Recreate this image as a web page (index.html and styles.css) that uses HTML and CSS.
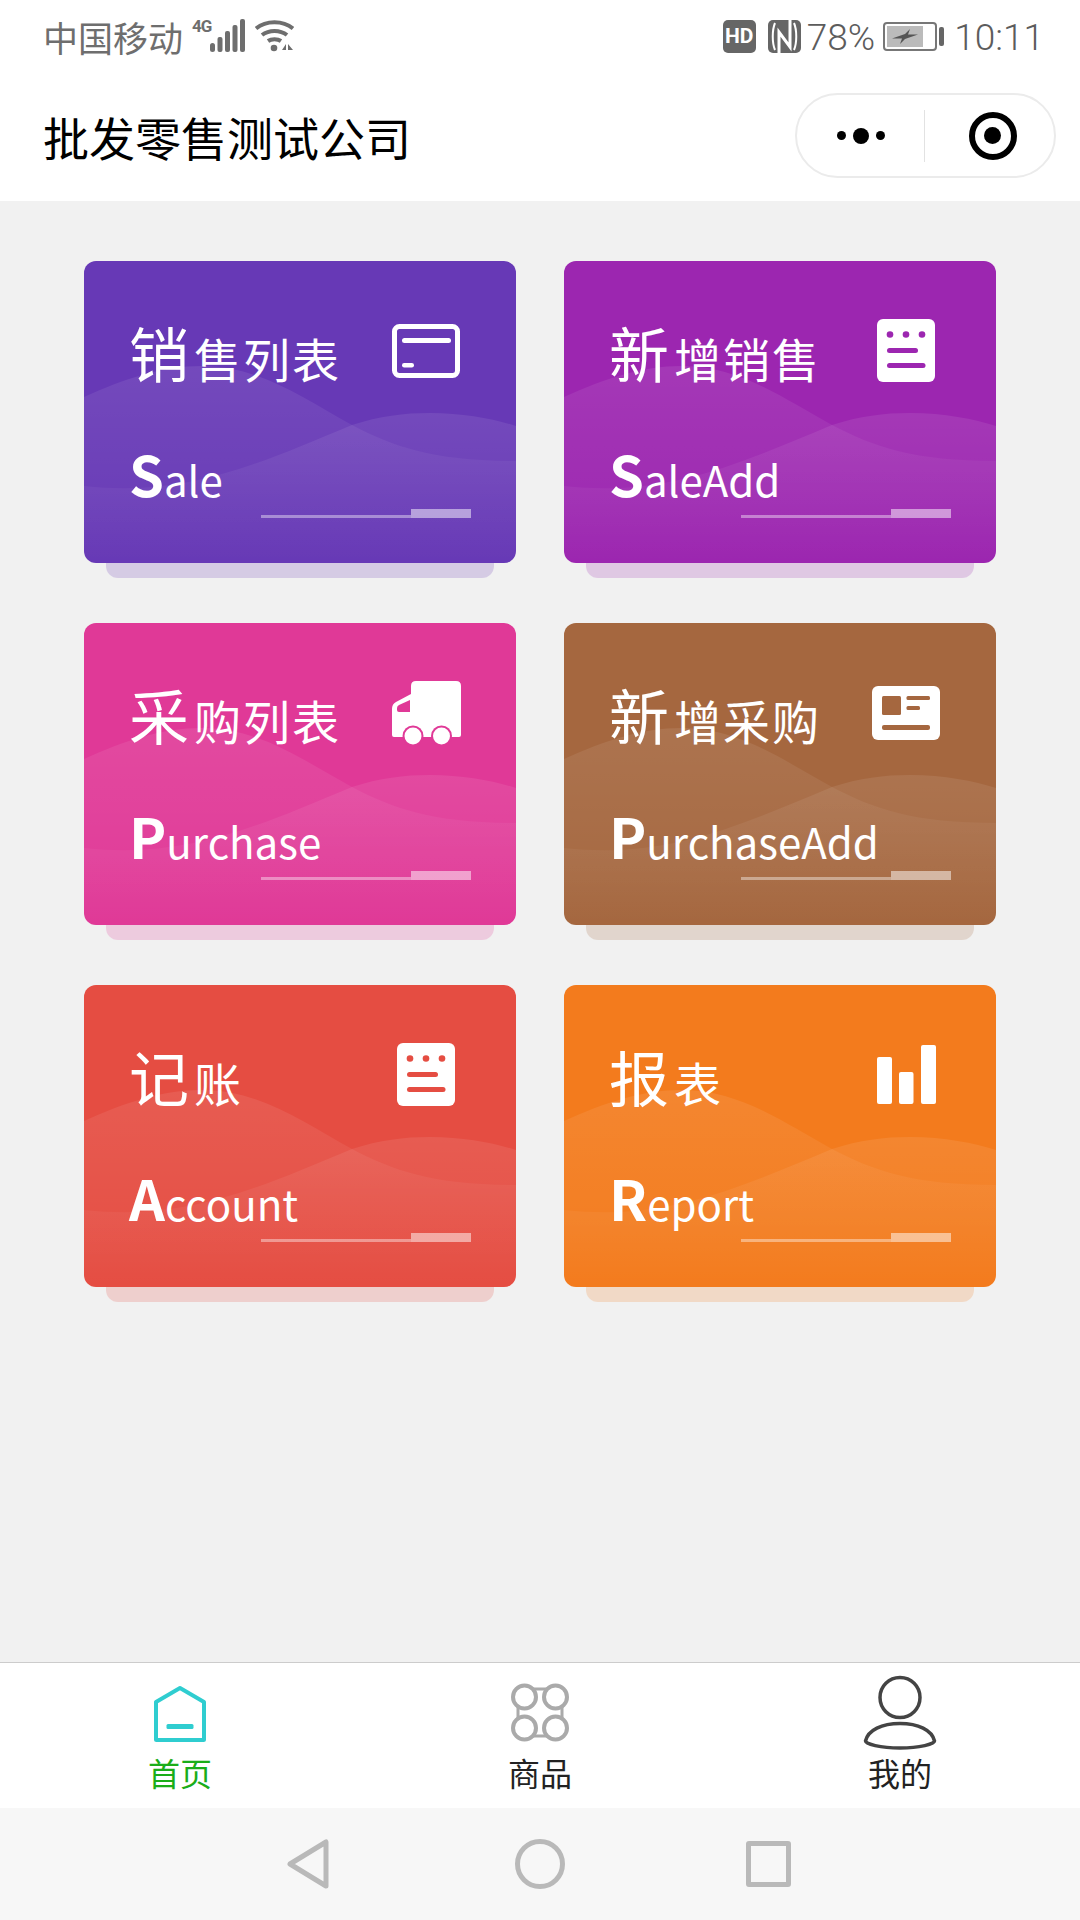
FILE: index.html
```html
<!DOCTYPE html>
<html lang="zh-CN">
<head>
    <meta charset="UTF-8">
    <meta name="viewport" content="width=device-width, initial-scale=1.0">
    <title>批发零售测试公司</title>
    <link rel="stylesheet" href="styles.css">
</head>
<body>
    <!-- Shared shapes -->
    <svg class="defs" width="0" height="0">
        <defs>
            <linearGradient id="waveFade" x1="0" y1="0" x2="0" y2="1">
                <stop offset="0" stop-color="#fff" stop-opacity="0.085"/>
                <stop offset="1" stop-color="#fff" stop-opacity="0"/>
            </linearGradient>
            <symbol id="waves" viewBox="0 0 432 302">
                <path fill="url(#waveFade)" d="M0 136C40 118 78 105 118 105C176 105 220 138 268 164C310 186 350 200 432 200V302H0Z"/>
                <path fill="url(#waveFade)" d="M0 225C100 236 170 205 268 164C296 155 320 152 346 152C380 152 410 158 432 165V302H0Z"/>
            </symbol>
            <symbol id="doc" viewBox="0 0 80 80">
                <rect x="11" y="8" width="58" height="63" rx="6" fill="#fff"/>
                <g class="cut">
                    <circle cx="24" cy="23.5" r="3.3"/>
                    <circle cx="40" cy="23.5" r="3.3"/>
                    <circle cx="56" cy="23.5" r="3.3"/>
                    <rect x="21" y="37" width="31" height="5" rx="2.5"/>
                    <rect x="21" y="52" width="38.5" height="5" rx="2.5"/>
                </g>
            </symbol>
        </defs>
    </svg>

    <div class="status-bar">
        <div class="status-left">
            <span class="carrier">中国移动</span>
            <span class="net">4G</span>
            <svg class="signal" width="35" height="33" viewBox="0 0 35 33">
                <rect x="0" y="24" width="5" height="9" rx="2.5"/>
                <rect x="7.500" y="18" width="5" height="15" rx="2"/>
                <rect x="15" y="12" width="5" height="21" rx="2"/>
                <rect x="22.500" y="6" width="5" height="27" rx="2"/>
                <rect x="30" y="0" width="5" height="33" rx="2"/>
            </svg>
            <svg class="wifi" width="39" height="33" viewBox="0 0 39 33">
                <path d="M1 9.500C11 1 28 1 38 9.500M7 16C14 10.500 25 10.500 32 16M13 22C16.500 19.500 22.500 19.500 26 22" fill="none" stroke="#6e6e6e" stroke-width="4"/>
                <circle cx="19" cy="29" r="3.300" fill="#6e6e6e"/>
                <path d="M27 31H31V25ZM33 25V31H38Z" fill="#6e6e6e"/>
            </svg>
        </div>
        <div class="status-right">
            <span class="hd">HD</span>
            <svg class="nfc" width="33" height="33" viewBox="0 0 33 33">
                <rect width="33" height="33" rx="5" fill="#666"/>
                <path d="M7 3C4 10 4 23 7 30M26 3C29 10 29 23 26 30" fill="none" stroke="#fff" stroke-width="2"/>
                <path d="M11 33V12L22 27V0" fill="none" stroke="#fff" stroke-width="3"/>
            </svg>
            <span class="pct">78%</span>
            <div class="battery">
                <div class="battery-body">
                    <div class="battery-fill">
                        <svg width="26" height="15" viewBox="0 0 26 15"><path d="M0 9.500L13 5L18 0L16 5.500L26 5.500L13 10L8 15L10 9.500Z" fill="#555"/></svg>
                    </div>
                </div>
                <div class="battery-nub"></div>
            </div>
            <span class="clock">10:11</span>
        </div>
    </div>

    <div class="nav-bar">
        <div class="nav-title">批发零售测试公司</div>
        <div class="capsule">
            <div class="capsule-more">
                <span class="dot"></span>
                <span class="dot dot-big"></span>
                <span class="dot"></span>
            </div>
            <div class="capsule-line"></div>
            <div class="capsule-close"><span class="target"></span></div>
        </div>
    </div>

    <div class="main">
        <div class="grid">
            <div class="card purple">
                <svg class="card-waves"><use href="#waves"/></svg>
                <div class="card-top">
                    <div class="card-title"><span class="first">销</span>售列表</div>
                    <svg class="card-icon" viewBox="0 0 80 80">
                        <rect x="8.500" y="15.500" width="63" height="49" rx="5" fill="none" stroke="#fff" stroke-width="5"/>
                        <rect x="16" y="27" width="49" height="5" rx="2.500" fill="#fff"/>
                        <rect x="16" y="52" width="12" height="4.500" rx="2.200" fill="#fff"/>
                    </svg>
                </div>
                <div class="card-en"><span class="first">S</span>ale</div>
                <div class="card-bar"><span class="bar-line"></span><span class="bar-block"></span></div>
            </div>

            <div class="card mauve">
                <svg class="card-waves"><use href="#waves"/></svg>
                <div class="card-top">
                    <div class="card-title"><span class="first">新</span>增销售</div>
                    <svg class="card-icon" viewBox="0 0 80 80"><use href="#doc"/></svg>
                </div>
                <div class="card-en"><span class="first">S</span>aleAdd</div>
                <div class="card-bar"><span class="bar-line"></span><span class="bar-block"></span></div>
            </div>

            <div class="card pink">
                <svg class="card-waves"><use href="#waves"/></svg>
                <div class="card-top">
                    <div class="card-title"><span class="first">采</span>购列表</div>
                    <svg class="card-icon" viewBox="0 0 80 80">
                        <path d="M25 13Q25 8 30 8H70Q75 8 75 13V62Q75 64 73 64H8Q6 64 6 62V36Q6 31 10 29L25 21Z" fill="#fff"/>
                        <path class="cut" d="M24 27V39H13Q11 39 11 37V35Q11 33 13 32Z"/>
                        <circle class="cut" cx="27" cy="63" r="10.500"/>
                        <circle class="cut" cx="55.500" cy="63" r="10.500"/>
                        <circle cx="27" cy="63" r="8.500" fill="#fff"/>
                        <circle cx="55.500" cy="63" r="8.500" fill="#fff"/>
                    </svg>
                </div>
                <div class="card-en"><span class="first">P</span>urchase</div>
                <div class="card-bar"><span class="bar-line"></span><span class="bar-block"></span></div>
            </div>

            <div class="card brown">
                <svg class="card-waves"><use href="#waves"/></svg>
                <div class="card-top">
                    <div class="card-title"><span class="first">新</span>增采购</div>
                    <svg class="card-icon" viewBox="0 0 80 80">
                        <rect x="6" y="13" width="68" height="54" rx="6" fill="#fff"/>
                        <g class="cut">
                            <rect x="16" y="23" width="19" height="19" rx="1.500"/>
                            <rect x="40.500" y="23" width="23.500" height="4" rx="1.500"/>
                            <rect x="40.500" y="33" width="13.500" height="4" rx="1.500"/>
                            <rect x="16" y="52" width="48" height="5" rx="2"/>
                        </g>
                    </svg>
                </div>
                <div class="card-en"><span class="first">P</span>urchaseAdd</div>
                <div class="card-bar"><span class="bar-line"></span><span class="bar-block"></span></div>
            </div>

            <div class="card red">
                <svg class="card-waves"><use href="#waves"/></svg>
                <div class="card-top">
                    <div class="card-title"><span class="first">记</span>账</div>
                    <svg class="card-icon" viewBox="0 0 80 80"><use href="#doc"/></svg>
                </div>
                <div class="card-en"><span class="first">A</span>ccount</div>
                <div class="card-bar"><span class="bar-line"></span><span class="bar-block"></span></div>
            </div>

            <div class="card orange">
                <svg class="card-waves"><use href="#waves"/></svg>
                <div class="card-top">
                    <div class="card-title"><span class="first">报</span>表</div>
                    <svg class="card-icon" viewBox="0 0 80 80" fill="#fff">
                        <rect x="11" y="22" width="15" height="47" rx="2"/>
                        <rect x="33" y="37" width="14.500" height="32" rx="2"/>
                        <rect x="55" y="10" width="15" height="59" rx="2"/>
                    </svg>
                </div>
                <div class="card-en"><span class="first">R</span>eport</div>
                <div class="card-bar"><span class="bar-line"></span><span class="bar-block"></span></div>
            </div>
        </div>
    </div>

    <div class="tab-bar">
        <div class="tab active">
            <svg class="tab-icon" viewBox="0 0 80 80">
                <path d="M40 15L16 29V66.500Q16 67 16.500 67H63.500Q64 67 64 66.500V29Z" fill="none" stroke="#2fcdd0" stroke-width="4" stroke-linejoin="round"/>
                <rect x="26.500" y="51" width="27" height="5" rx="1.500" fill="#2fcdd0"/>
            </svg>
            <span class="tab-label">首页</span>
        </div>
        <div class="tab">
            <svg class="tab-icon" viewBox="0 0 80 80" fill="none" stroke="#aaa">
                <path d="M33 16H47M33 63H47M18 33.500V45.500M62 33.500V45.500" stroke-width="3"/>
                <g stroke-width="4">
                    <circle cx="24.500" cy="24" r="11.500"/>
                    <circle cx="55.500" cy="24" r="11.500"/>
                    <circle cx="24.500" cy="55" r="11.500"/>
                    <circle cx="55.500" cy="55" r="11.500"/>
                </g>
            </svg>
            <span class="tab-label">商品</span>
        </div>
        <div class="tab">
            <svg class="tab-icon" viewBox="0 0 80 80" fill="none" stroke="#444" stroke-width="3.500">
                <circle cx="40" cy="24.500" r="20"/>
                <path d="M5.500 68C8 57 22 50.500 40 50.500C58 50.500 72 57 74.500 68C74.500 71 60 75 40 75C20 75 5.500 71 5.500 68Z"/>
            </svg>
            <span class="tab-label">我的</span>
        </div>
    </div>

    <div class="sys-nav">
        <svg width="42" height="50" viewBox="0 0 42 50"><path d="M39 3V47L3 25Z" fill="none" stroke="#b9b9b9" stroke-width="5" stroke-linejoin="round"/></svg>
        <span class="sys-circle"></span>
        <span class="sys-square"></span>
    </div>
</body>
</html>
```

FILE: styles.css
```css
* {
    margin: 0;
    padding: 0;
    box-sizing: border-box;
}

body {
    width: 1080px;
    height: 1920px;
    display: flex;
    flex-direction: column;
    background: #f1f1f1;
    font-family: "Noto Sans CJK SC", "Noto Sans", sans-serif;
    overflow: hidden;
}

.defs {
    position: absolute;
}

/* Status bar */
.status-bar {
    height: 72px;
    display: flex;
    justify-content: space-between;
    padding: 19px 36px 0 43px;
    background: #fff;
    color: #6e6e6e;
}

.status-left,
.status-right {
    display: flex;
    align-items: flex-start;
}

.carrier {
    font-size: 35px;
    line-height: 36px;
}

.net {
    width: 18px;
    margin: 0 0 0 9px;
    font: bold 17px/14px "Roboto", sans-serif;
    letter-spacing: -1px;
}

.signal {
    fill: #6e6e6e;
}

.wifi {
    margin-left: 10px;
}

.hd {
    width: 33px;
    height: 33px;
    margin-top: 1px;
    background: #666;
    border-radius: 5px;
    color: #fff;
    font: bold 21px/33px "Roboto", sans-serif;
    text-align: center;
}

.nfc {
    margin: 1px 0 0 12px;
}

.pct,
.clock {
    font: 300 37px/36px "Roboto", sans-serif;
    margin-top: 1px;
    color: #5c5c5c;
}

.pct {
    margin-left: 6px;
}

.clock {
    margin-left: 10px;
}

.battery {
    display: flex;
    align-items: center;
    margin: 3px 0 0 8px;
}

.battery-body {
    width: 54px;
    height: 29px;
    border: 2px solid #777;
    border-radius: 4px;
    padding: 2px;
}

.battery-fill {
    width: 36px;
    height: 21px;
    background: #bbb;
    display: flex;
    align-items: center;
    justify-content: center;
}

.battery-nub {
    width: 5px;
    height: 19px;
    margin-left: 2px;
    background: #666;
    border-radius: 2px;
}

/* Title bar */
.nav-bar {
    height: 129px;
    display: flex;
    justify-content: space-between;
    align-items: flex-start;
    padding: 21px 24px 0 43px;
    background: #fff;
}

.nav-title {
    margin-top: 15px;
    font-size: 46px;
    line-height: 56px;
    color: #000;
}

.capsule {
    width: 261px;
    height: 85px;
    display: flex;
    align-items: center;
    border: 2px solid #ebebeb;
    border-radius: 43px;
}

.capsule-more {
    width: 127px;
    display: flex;
    align-items: center;
    justify-content: center;
    gap: 7px;
}

.dot {
    width: 9px;
    height: 9px;
    background: #000;
    border-radius: 50%;
}

.dot-big {
    width: 16px;
    height: 16px;
}

.capsule-line {
    width: 1px;
    height: 52px;
    background: #e2e2e2;
}

.capsule-close {
    flex: 1;
    display: flex;
    justify-content: center;
    padding-left: 6px;
}

.target {
    width: 48px;
    height: 48px;
    border: 6px solid #000;
    border-radius: 50%;
    display: flex;
    align-items: center;
    justify-content: center;
}

.target:after {
    content: "";
    width: 17px;
    height: 17px;
    background: #000;
    border-radius: 50%;
}

/* Cards */
.main {
    flex: 1;
    padding: 60px 84px 0;
}

.grid {
    display: grid;
    grid-template-columns: 432px 432px;
    column-gap: 48px;
    row-gap: 60px;
    isolation: isolate;
}

.card {
    position: relative;
    height: 302px;
    display: flex;
    flex-direction: column;
    padding: 50px 45px 45px 45px;
    background: var(--c);
    border-radius: 12px;
    color: #fff;
}

/* Faded strip under each card */
.card:after {
    content: "";
    position: absolute;
    left: 22px;
    right: 22px;
    bottom: -15px;
    height: 40px;
    background: var(--c);
    border-radius: 12px;
    opacity: 0.2;
    z-index: -1;
}

.purple { --c: #6739b6; }
.mauve { --c: #9c26b0; }
.pink { --c: #e03997; }
.brown { --c: #a5673f; }
.red { --c: #e54d42; }
.orange { --c: #f37b1d; }

.cut {
    fill: var(--c);
}

.card-waves {
    position: absolute;
    top: 0;
    left: 0;
    width: 100%;
    height: 100%;
    border-radius: 12px;
}

.card-top {
    position: relative;
    height: 80px;
    display: flex;
    justify-content: space-between;
}

.card-title {
    margin-top: 9px;
    font-size: 47px;
    line-height: 64px;
    letter-spacing: 2px;
    white-space: nowrap;
}

.card-title .first {
    font-size: 60px;
    letter-spacing: 5px;
}

.card-icon {
    width: 80px;
    height: 80px;
    margin-right: 5px;
}

.card-en {
    position: relative;
    height: 70px;
    margin-top: 47px;
    font-size: 42px;
    line-height: 70px;
    white-space: nowrap;
}

.card-en .first {
    font-size: 56px;
    font-weight: 700;
}

.card-bar {
    position: relative;
    align-self: flex-end;
    width: 210px;
    margin-top: auto;
    display: flex;
    align-items: flex-end;
}

.bar-line {
    flex: 1;
    height: 3px;
    background: rgba(255, 255, 255, 0.4);
}

.bar-block {
    width: 60px;
    height: 9px;
    background: rgba(255, 255, 255, 0.5);
}

/* Bottom tabs */
.tab-bar {
    height: 146px;
    display: grid;
    grid-template-columns: repeat(3, 1fr);
    background: #fff;
    border-top: 1px solid #ccc;
}

.tab {
    display: flex;
    flex-direction: column;
    align-items: center;
    padding-top: 10px;
}

.tab-icon {
    width: 80px;
    height: 80px;
}

.tab-label {
    margin-top: -3px;
    font-size: 32px;
    line-height: 44px;
    color: #222;
}

.active .tab-label {
    color: #1aad19;
}

/* System navigation */
.sys-nav {
    height: 112px;
    display: flex;
    align-items: center;
    justify-content: center;
    gap: 186px;
    padding-right: 3px;
    background: #f7f7f7;
}

.sys-circle {
    width: 50px;
    height: 50px;
    border: 5px solid #b9b9b9;
    border-radius: 50%;
}

.sys-square {
    width: 45px;
    height: 46px;
    margin-left: -5px;
    border: 5px solid #b9b9b9;
    border-radius: 3px;
}
```
